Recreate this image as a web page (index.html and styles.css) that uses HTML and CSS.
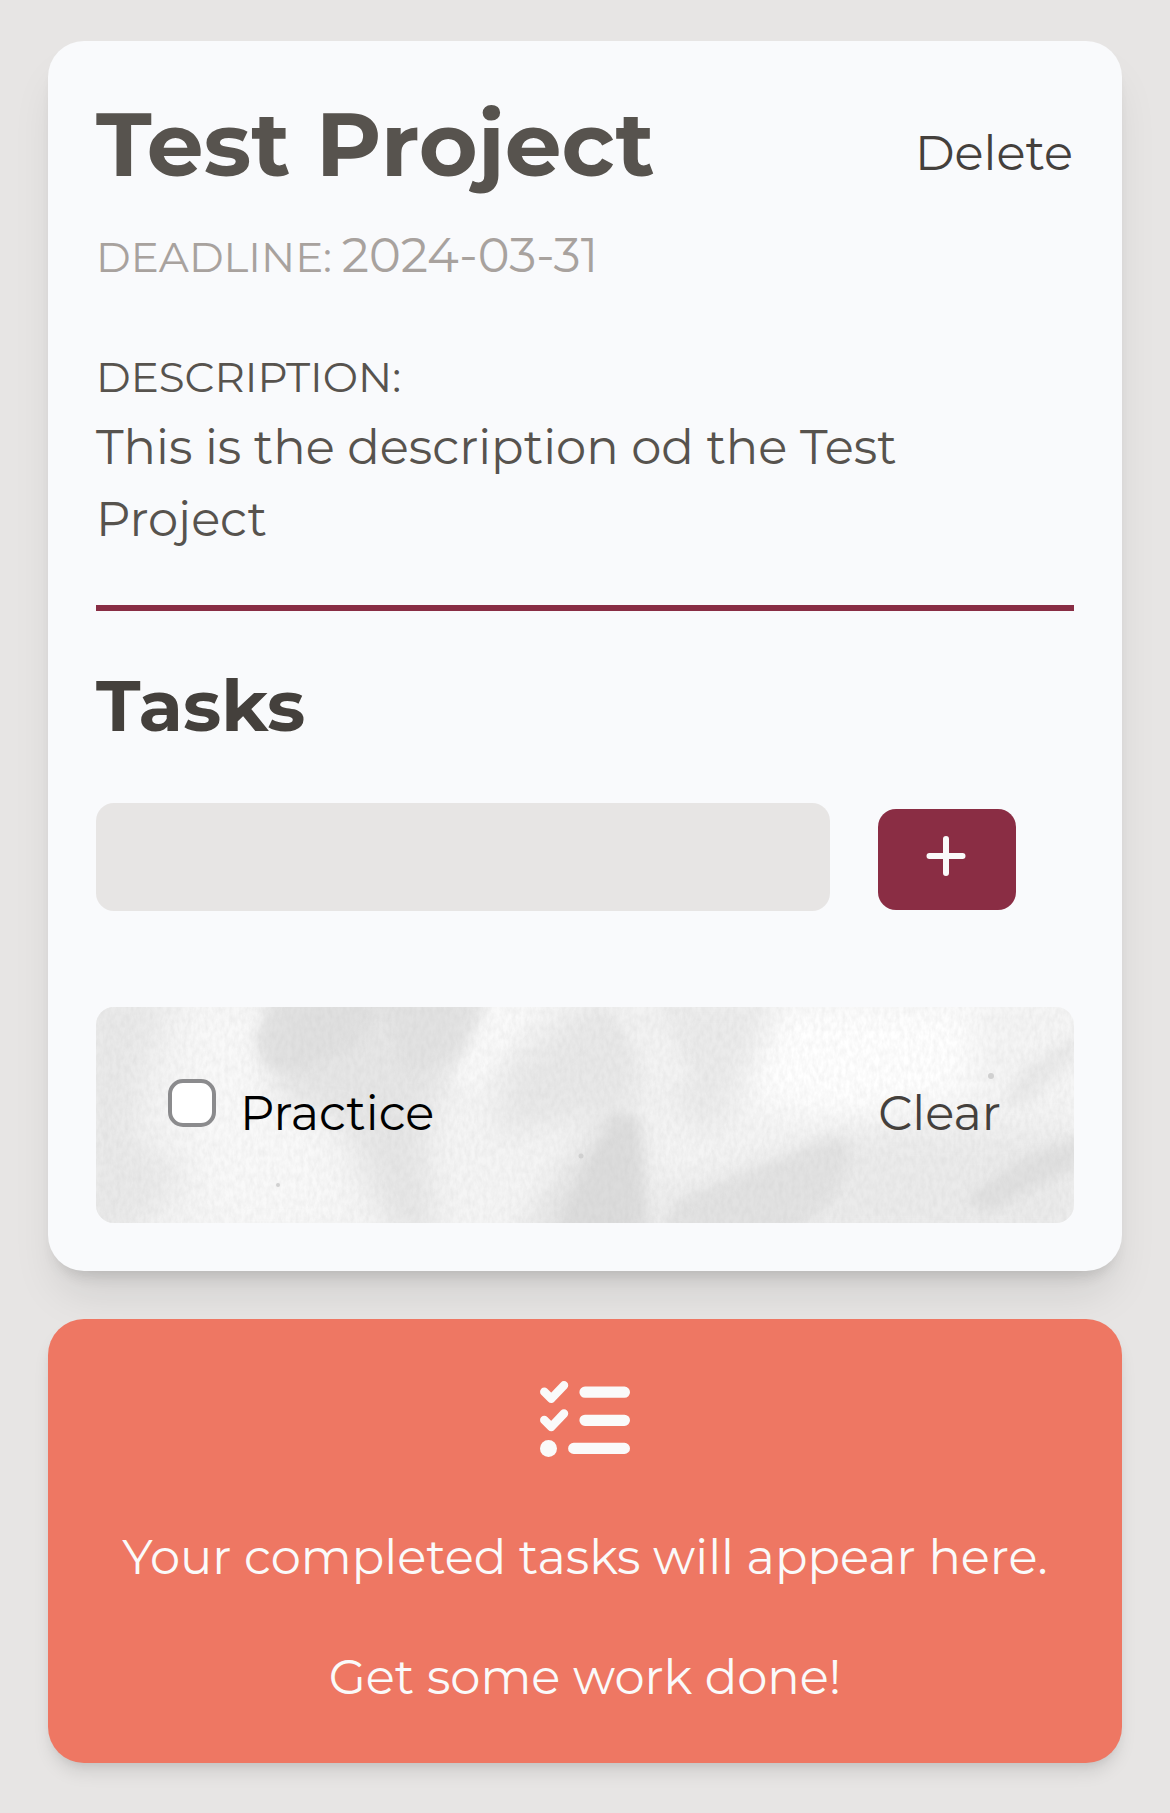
FILE: index.html
```html
<!DOCTYPE html>
<html lang="en">
<head>
<meta charset="utf-8">
<title>Test Project</title>
<link rel="stylesheet" href="styles.css">
</head>
<body>
<main class="page">
  <section class="card project">
    <header class="head">
      <h1 class="title">Test Project</h1>
      <button class="link delete">Delete</button>
    </header>
    <p class="deadline"><span class="label">DEADLINE:</span><span>2024-03-31</span></p>
    <p class="description"><span class="label">DESCRIPTION:</span><br>This is the description od the Test<br>Project</p>
    <h2 class="subtitle">Tasks</h2>
    <form class="add">
      <input class="field" type="text" aria-label="New task">
      <button class="plus" type="button" aria-label="Add task">
        <svg width="40" height="40" viewBox="0 0 40 40"><path d="M20 3v34M3.5 20h33" stroke="#fafafa" stroke-width="6" stroke-linecap="round"/></svg>
      </button>
    </form>
    <ul class="tasks">
      <li class="task">
        <svg class="paper" viewBox="0 0 978 216" preserveAspectRatio="none" aria-hidden="true">
          <defs>
            <filter id="grain" x="0" y="0" width="100%" height="100%">
              <feTurbulence type="fractalNoise" baseFrequency="0.24 0.12" numOctaves="3" seed="8"/>
              <feColorMatrix values="0 0 0 0 0.5  0 0 0 0 0.5  0 0 0 0 0.5  0.3 0 0 0 -0.09"/>
            </filter>
            <filter id="soft" x="-20%" y="-20%" width="140%" height="140%"><feGaussianBlur stdDeviation="15"/></filter>
            <filter id="crease" x="-20%" y="-20%" width="140%" height="140%"><feGaussianBlur stdDeviation="6"/></filter>
          </defs>
          <rect width="978" height="216" fill="#f5f5f5"/>
          <g filter="url(#soft)">
            <path d="M-20-20H80L50 60 40 130 90 170 30 236H-20Z" fill="#e9e9e9"/>
            <path d="M100 0H172L156 60 220 110 250 216H120L90 90Z" fill="#f9f9f9"/>
            <path d="M180 -20H390L350 80 330 120 340 236H300L250 120 175 90Z" fill="#e6e6e6"/>
            <path d="M410 60L500-10H560L540 100 400 130Z" fill="#e8e8e8"/>
            <path d="M560-10H690L620 130 580 110Z" fill="#ebebeb"/>
            <path d="M680 0H880L870 90 730 110 650 90Z" fill="#ffffff"/>
            <path d="M560 180L650 155 742 124 990 120V236H560Z" fill="#ebebeb"/>
            <path d="M420 236L470 155 518 104 546 120 550 236Z" fill="#e3e3e3"/>
          </g>
          <g filter="url(#crease)">
            <path d="M182-20H300L260 40 200 66 170 60 158 34Z" fill="#dedede" fill-opacity=".8"/>
            <path d="M280-20H394L364 50 310 66Z" fill="#e0e0e0" fill-opacity=".6"/>
            <path d="M400-10H450L380 80 356 76Z" fill="#fafafa" fill-opacity=".85"/>
            <path d="M455 236L495 150 518 108 542 110 552 236Z" fill="#dadada" fill-opacity=".75"/>
            <path d="M500-20H550L600 75 560 80Z" fill="#f5f5f5" fill-opacity=".7"/>
            <path d="M580 196L650 165 742 128 756 145 740 190 680 236H560Z" fill="#e0e0e0" fill-opacity=".8"/>
            <path d="M870 190L930 150 990 128V154L890 206Z" fill="#dcdcdc" fill-opacity=".7"/>
            <path d="M905 100L925 62 988 24V42L930 98Z" fill="#e6e6e6" fill-opacity=".7"/>
          </g>
          <rect width="978" height="216" filter="url(#grain)"/>
          <g fill="#d0d0d0"><circle cx="485" cy="149" r="2.5"/><circle cx="182" cy="178" r="2"/><circle cx="895" cy="69" r="3"/></g>
        </svg>
        <label class="check"><input class="box" type="checkbox"><span class="name">Practice</span></label>
        <button class="link clear">Clear</button>
      </li>
    </ul>
  </section>
  <section class="card done">
    <svg class="list-icon" width="90" height="90" viewBox="0 0 90 90" fill="none" stroke="#fafafa" stroke-linecap="round" stroke-linejoin="round">
      <path d="M4.3 17.7l7 7L24 11.3M4.3 45.9l7 7L24 39.5" stroke-width="8.5"/>
      <path d="M45 18.2h39.4M45 46.3h39.4M33.7 74.4h50.7" stroke-width="11.2"/>
      <circle cx="8.5" cy="74.4" r="8.5" fill="#fafafa" stroke="none"/>
    </svg>
    <p class="note note-first">Your completed tasks will appear here.</p>
    <p class="note note-second">Get some work done!</p>
  </section>
</main>
</body>
</html>
```

FILE: styles.css
```css
* { box-sizing: border-box; margin: 0; padding: 0; }

body {
  background: #e7e5e4;
  font-family: Montserrat, Inter, sans-serif;
  font-size: 48px;
  font-weight: 400;
  line-height: 72px;
  color: #57534e;
}

.page { display: flex; flex-direction: column; gap: 48px; padding: 41px 48px 50px; }
.card { border-radius: 36px; }

.project {
  height: 1230px;
  padding: 48px;
  background: #f9fafc;
  box-shadow: 0 30px 45px -9px rgb(0 0 0 / 0.1), 0 12px 18px -12px rgb(0 0 0 / 0.1), 0 12px 18px -9px rgb(0 0 0 / 0.08);
}

.head { display: flex; justify-content: space-between; align-items: flex-start; height: 130px; }
.title { margin-top: 1px; font-size: 90px; font-weight: 700; line-height: 108px; color: #57534e; }
.link { border: 0; background: none; font: inherit; line-height: 72px; color: #44403c; white-space: nowrap; }
.delete { margin: 28px 1px 0 0; }

.label { font-size: 42px; line-height: 60px; }
.deadline { display: flex; align-items: baseline; gap: 10px; height: 72px; color: #a8a29e; white-space: nowrap; }
.description { height: 274px; margin-top: 46px; padding-top: 2px; border-bottom: 6px solid #882d44; white-space: nowrap; }

.subtitle { margin-top: 46px; font-size: 72px; font-weight: 700; line-height: 96px; color: #44403c; }

.add { display: flex; align-items: flex-end; gap: 48px; height: 108px; margin-top: 50px; }
.field { width: 734px; height: 108px; border: 0; border-radius: 18px; background: #e7e5e4; }
.plus {
  display: flex; align-items: center; justify-content: center;
  width: 138px; height: 101px; margin-bottom: 1px; padding: 0 2px 7px 0;
  border: 0; border-radius: 18px; background: #8a2d44;
}

.tasks { margin-top: 96px; list-style: none; }
.task {
  position: relative; display: flex; justify-content: space-between; align-items: flex-start;
  height: 216px; padding: 70px 72px; border-radius: 18px; overflow: hidden;
}
.paper { position: absolute; inset: 0; width: 100%; height: 100%; }
.check { position: relative; display: flex; gap: 24px; color: #000; }
.box {
  appearance: none; width: 48px; height: 48px; margin-top: 2px;
  border: 4px solid #8b8b8d; border-radius: 15px; background: #fff;
}
.clear { position: relative; margin-right: 1px; }

.done {
  display: flex; flex-direction: column; align-items: center;
  height: 444px; padding-top: 55px; background: #ee7763; color: #fafafa;
  box-shadow: 0 12px 18px -3px rgb(0 0 0 / 0.1), 0 6px 12px -6px rgb(0 0 0 / 0.1);
}
.note { white-space: nowrap; }
.note-first { margin-top: 57px; }
.note-second { margin-top: 48px; }
```
